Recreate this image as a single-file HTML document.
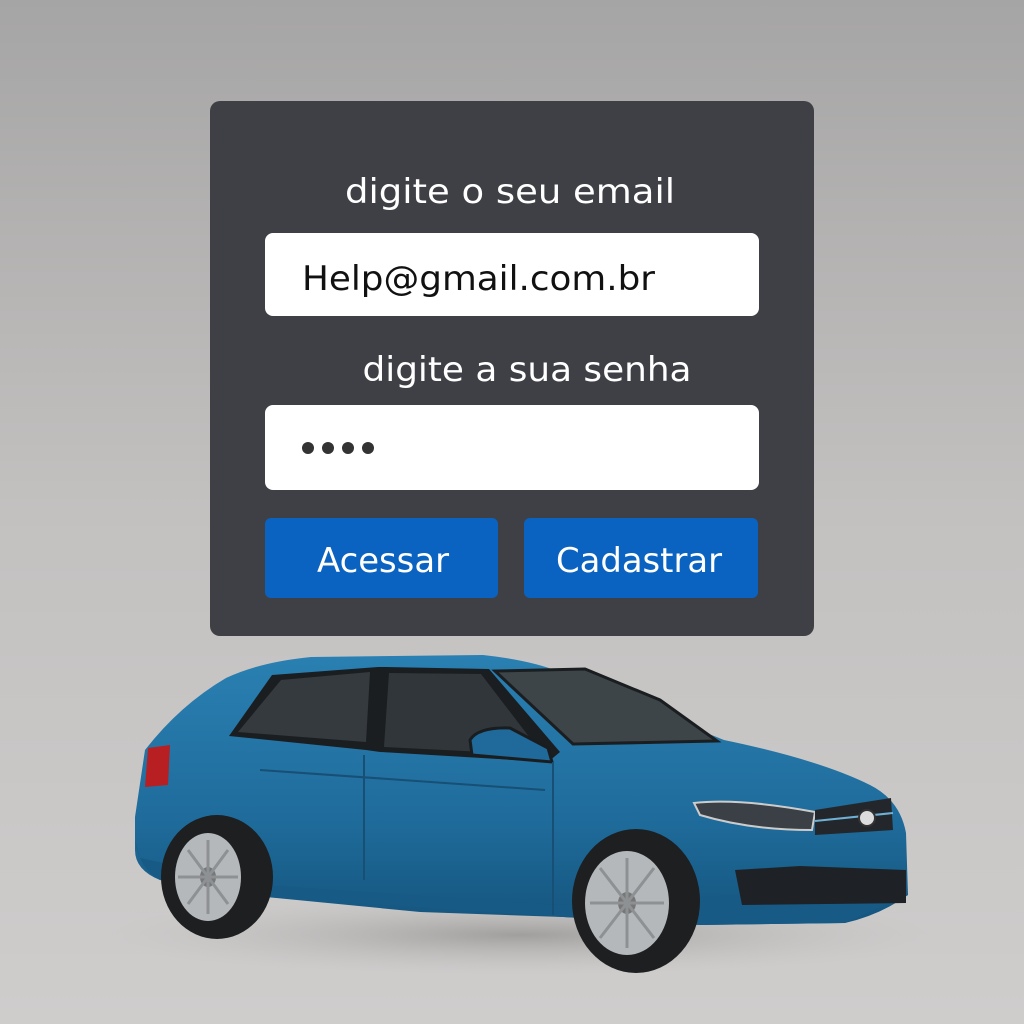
<!DOCTYPE html>
<html><head><meta charset="utf-8"><style>
html,body{margin:0;padding:0;width:1024px;height:1024px;overflow:hidden}
body{background:linear-gradient(#a6a5a5 0%,#c3c1c0 50%,#cfcdcc 100%)}
svg{position:absolute;left:0;top:0}
text{font-family:"DejaVu Sans","Liberation Sans",sans-serif}
</style></head><body>
<svg width="1024" height="1024" viewBox="0 0 1024 1024">
<defs>
<linearGradient id="bd" x1="0" y1="0" x2="0" y2="1"><stop offset="0" stop-color="#2a80b2"/><stop offset="0.6" stop-color="#1f6c9c"/><stop offset="1" stop-color="#15557e"/></linearGradient>
<radialGradient id="sh" cx="0.5" cy="0.5" r="0.5"><stop offset="0" stop-color="#8e8c8b" stop-opacity="0.7"/><stop offset="1" stop-color="#bbb" stop-opacity="0"/></radialGradient>
</defs>
<rect x="210" y="101" width="604" height="535" rx="10" fill="#3f4046"/>
<text x="510" y="203" font-size="34" fill="#fff" text-anchor="middle" textLength="330" lengthAdjust="spacingAndGlyphs">digite o seu email</text>
<rect x="265" y="233" width="494" height="83" rx="8" fill="#fff"/>
<text x="302" y="290" font-size="34" fill="#111" textLength="353" lengthAdjust="spacingAndGlyphs">Help@gmail.com.br</text>
<text x="527" y="381" font-size="34" fill="#fff" text-anchor="middle" textLength="329" lengthAdjust="spacingAndGlyphs">digite a sua senha</text>
<rect x="265" y="405" width="494" height="85" rx="8" fill="#fff"/>
<g fill="#333"><circle cx="308" cy="448" r="6"/><circle cx="328" cy="448" r="6"/><circle cx="348" cy="448" r="6"/><circle cx="368" cy="448" r="6"/></g>
<rect x="265" y="518" width="233" height="80" rx="6" fill="#0a63c0"/>
<rect x="524" y="518" width="234" height="80" rx="6" fill="#0a63c0"/>
<text x="383" y="572" font-size="34" fill="#fff" text-anchor="middle" textLength="132" lengthAdjust="spacingAndGlyphs">Acessar</text>
<text x="639" y="572" font-size="34" fill="#fff" text-anchor="middle" textLength="166" lengthAdjust="spacingAndGlyphs">Cadastrar</text>

<!-- car -->
<ellipse cx="520" cy="935" rx="420" ry="40" fill="url(#sh)"/>
<path d="M226,678 Q260,662 311,657 L483,655 Q530,660 560,672 L600,690 L724,740 Q820,760 870,785 Q900,800 906,833 L908,895 Q880,915 845,923 L700,925 L563,917 L420,912 L266,897 L160,880 Q135,870 135,850 L135,817 L145,750 Q180,705 226,678 Z" fill="url(#bd)"/>
<path d="M135,840 Q140,870 160,880 L266,897 L563,917 L700,925 L845,923 L908,895 L906,885 L560,905 L266,885 L140,858 Z" fill="#175a85"/>
<path d="M148,748 L170,745 L168,785 L145,787 Z" fill="#b81f22"/>
<path d="M229,736 L272,675 L378,667 L386,667 L489,669 L560,752 L548,762 L380,752 L366,750 Z" fill="#1b1e21"/>
<path d="M281,680 L370,672 L366,742 L238,732 Z" fill="#343a3e"/>
<path d="M389,673 L481,674 L543,755 L384,747 Z" fill="#30363a"/>
<path d="M495,671 L585,669 L660,700 L717,741 L573,744 Z" fill="#3d4549" stroke="#1b1e21" stroke-width="3"/>
<path d="M470,740 Q478,727 510,728 L548,748 L552,762 L472,755 Z" fill="#1f6a9a" stroke="#1a1d20" stroke-width="3"/>
<path d="M694,803 Q740,798 815,812 L812,830 Q750,830 700,815 Z" fill="#3a4045" stroke="#ccc" stroke-width="2"/>
<path d="M815,810 L891,798 L893,830 L815,835 Z" fill="#23272b"/>
<path d="M815,821 L893,813" stroke="#6fb0d6" stroke-width="2"/>
<circle cx="867" cy="818" r="8" fill="#ddd" stroke="#333" stroke-width="2"/>
<path d="M735,870 L800,866 L906,870 L906,903 L742,905 Z" fill="#1e2226"/>
<path d="M364,755 L364,880 M553,762 L553,915 M260,770 L545,790" stroke="#174f75" stroke-width="2"/>
<!-- wheels -->
<ellipse cx="217" cy="877" rx="56" ry="62" fill="#1d1f21"/>
<ellipse cx="208" cy="877" rx="33" ry="44" fill="#b5b8bb"/>
<ellipse cx="208" cy="877" rx="8" ry="10" fill="#777"/>
<ellipse cx="636" cy="901" rx="64" ry="72" fill="#1d1f21"/>
<ellipse cx="627" cy="903" rx="42" ry="52" fill="#b5b8bb"/>
<ellipse cx="627" cy="903" rx="9" ry="11" fill="#777"/>
<g stroke="#8e9194" stroke-width="3"><path d="M208,840 V914 M178,877 H238 M188,850 L228,904 M228,850 L188,904"/>
<path d="M627,858 V948 M590,903 H664 M600,868 L654,938 M654,868 L600,938"/></g>
</svg>
</body></html>
